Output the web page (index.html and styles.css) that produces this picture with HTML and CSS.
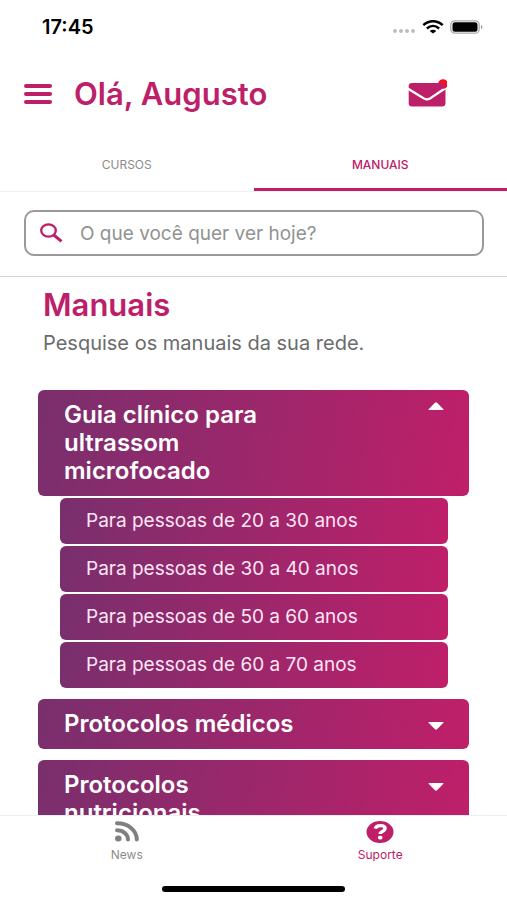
FILE: index.html
```html
<!DOCTYPE html>
<html lang="pt-BR">
<head>
<meta charset="utf-8">
<meta name="viewport" content="width=device-width, initial-scale=1">
<title>Manuais</title>
<link rel="stylesheet" href="styles.css">
</head>
<body>
<div class="app">
  <div class="status-bar">
    <span class="status-time">17:45</span>
    <div class="status-icons">
      <svg width="24" height="6" viewBox="0 0 24 6" fill="#bdbdbd" aria-hidden="true"><circle cx="3" cy="3" r="2"/><circle cx="9" cy="3" r="2"/><circle cx="15" cy="3" r="2"/><circle cx="21" cy="3" r="2"/></svg>
      <svg width="22" height="14" viewBox="0 0 22 14" aria-hidden="true"><g fill="none" stroke="#000" stroke-width="2.5"><path d="M1.3 5.1C7-.1 15-.1 20.7 5.1"/><path d="M4.9 8.5c3.7-3.3 8.500-3.300 12.200 0"/></g><path d="M11 13.500 7.700 11c1.900-1.700 4.700-1.700 6.600 0z"/></svg>
      <svg width="33" height="14" viewBox="0 0 33 14" aria-hidden="true"><rect x=".8" y=".8" width="28.400" height="12.400" rx="4" fill="none" stroke="#aaa" stroke-width="1.300"/><rect x="2.500" y="2.300" width="25" height="9.400" rx="2.500"/><path d="M31 5c2 .8 2 3.200 0 4z" fill="#999"/></svg>
    </div>
  </div>

  <header class="header">
    <button class="icon-button" type="button" aria-label="Menu">
      <svg width="28" height="20" viewBox="0 0 28 20" stroke="#bd2069" stroke-width="3.800" stroke-linecap="round" aria-hidden="true"><path d="M1.900 2h24.200M1.900 10h24.200M1.900 18h24.200"/></svg>
    </button>
    <p class="greeting">Olá, Augusto</p>
    <button class="icon-button" type="button" aria-label="Mensagens">
      <svg width="40" height="30" viewBox="0 0 40 30" aria-hidden="true"><circle cx="36" cy="5" r="4.800" fill="#f70e16"/><path fill="#bd2069" d="M5 4h30q3.500 0 3.500 3.500L22.500 18.500q-2.500 1.600-5 0L1.700 8.800V7.300Q1.700 4 5 4z"/><path fill="#bd2069" d="M1.700 11.500 16.500 20.500q3.500 2 7 0L38.500 10.500V24q0 3.500-3.500 3.500H5Q1.700 27.500 1.700 24z"/></svg>
    </button>
  </header>

  <nav class="tabs" aria-label="Seções">
    <a class="tab" href="#cursos">CURSOS</a>
    <a class="tab tab-active" href="#manuais" aria-current="page">MANUAIS</a>
  </nav>

  <form class="search" role="search">
    <label class="search-box">
      <svg width="24" height="20" viewBox="0 0 24 20" fill="none" stroke="#bd2069" aria-hidden="true"><ellipse cx="8.500" cy="7.500" rx="7.300" ry="6.200" stroke-width="2.300"/><path d="m13.800 12 7.700 6.300" stroke-width="3"/></svg>
      <input class="search-input" type="search" placeholder="O que você quer ver hoje?" aria-label="O que você quer ver hoje?">
    </label>
  </form>

  <main class="content" id="manuais">
    <h1 class="title">Manuais</h1>
    <p class="subtitle">Pesquise os manuais da sua rede.</p>

    <div class="manuals">
      <section>
        <button class="card" type="button" aria-expanded="true">
          <span class="card-title">Guia clínico para ultrassom microfocado</span>
          <svg width="16" height="28" viewBox="0 0 16 28" fill="#fff" aria-hidden="true"><path d="M1 9Q0 9 .8 8.100L7 1.700q1-.9 2 0l6.200 6.400q.8.900-.2.900z"/></svg>
        </button>
        <ul class="sublist">
          <li><a class="subcard" href="#20-30">Para pessoas de 20 a 30 anos</a></li>
          <li><a class="subcard" href="#30-40">Para pessoas de 30 a 40 anos</a></li>
          <li><a class="subcard" href="#50-60">Para pessoas de 50 a 60 anos</a></li>
          <li><a class="subcard" href="#60-70">Para pessoas de 60 a 70 anos</a></li>
        </ul>
      </section>
      <section>
        <button class="card" type="button" aria-expanded="false">
          <span class="card-title">Protocolos médicos</span>
          <svg width="16" height="28" viewBox="0 0 16 28" fill="#fff" aria-hidden="true"><path d="M1 12q-1 0-.2.900L7 19.300q1 .9 2 0l6.200-6.400q.8-.9-.2-.9z"/></svg>
        </button>
      </section>
      <section>
        <button class="card" type="button" aria-expanded="false">
          <span class="card-title">Protocolos nutricionais</span>
          <svg width="16" height="28" viewBox="0 0 16 28" fill="#fff" aria-hidden="true"><path d="M1 12q-1 0-.2.900L7 19.300q1 .9 2 0l6.200-6.400q.8-.9-.2-.9z"/></svg>
        </button>
      </section>
    </div>
  </main>

  <footer class="footer">
    <nav class="bottom-nav" aria-label="Principal">
      <a class="nav-item" href="#news">
        <svg width="28" height="22" viewBox="0 0 28 22" aria-hidden="true"><ellipse cx="5.300" cy="17.500" rx="3.300" ry="2.900" fill="#808080"/><g fill="none" stroke="#808080" stroke-width="4" stroke-linecap="round"><path d="M4 9.300c6.200 0 11 4 11 9.200"/><path d="M4 2.300c11 0 19.800 7 19.800 16.200"/></g></svg>
        <span>News</span>
      </a>
      <a class="nav-item nav-active" href="#suporte">
        <svg width="28" height="22" viewBox="0 0 28 22" aria-hidden="true"><ellipse cx="14" cy="11" rx="13.500" ry="11" fill="#bd2069"/><path d="M9.300 7.700c1-4.300 9.800-3.900 9.800-.3 0 2.900-5 2.700-5 5.700" fill="none" stroke="#fff" stroke-width="3.400"/><rect x="11.900" y="14.800" width="4.600" height="3.800" rx="1.800" fill="#fff"/></svg>
        <span>Suporte</span>
      </a>
    </nav>
    <div class="home-indicator"></div>
  </footer>
</div>
</body>
</html>
```

FILE: styles.css
```css
:root {
  --brand: #bd2069;
  --gradient: linear-gradient(100deg, #792f6d 0%, #bf1f69 100%);
}

* {
  box-sizing: border-box;
}

body {
  margin: 0;
  background: #fff;
  font-family: Inter, Roboto, sans-serif;
}

p,
h1,
ul {
  margin: 0;
  padding: 0;
}

a {
  text-decoration: none;
}

svg {
  display: block;
  flex: none;
}

.app {
  display: flex;
  flex-direction: column;
  height: 100vh;
}

.status-bar {
  display: flex;
  flex: none;
  align-items: center;
  justify-content: space-between;
  height: 54px;
  padding: 0 24px 0 42px;
}

.status-time {
  font-size: 20px;
  font-weight: 600;
}

.status-icons {
  display: flex;
  align-items: flex-end;
  gap: 6px;
}

.header {
  display: flex;
  flex: none;
  align-items: center;
  height: 80px;
  padding: 0 60px 0 24px;
}

.icon-button {
  padding: 0;
  border: 0;
  background: none;
}

.greeting {
  flex: 1;
  margin-left: 22px;
  color: var(--brand);
  font-size: 31px;
  font-weight: 600;
  line-height: 38px;
}

.tabs {
  display: flex;
  flex: none;
  border-bottom: 1px solid #f0f0f0;
}

.tab {
  flex: 1;
  height: 57px;
  padding-top: 4px;
  border-bottom: 3px solid transparent;
  color: #8c8c8c;
  font-size: 12px;
  line-height: 54px;
  text-align: center;
}

.tab-active {
  border-color: var(--brand);
  color: var(--brand);
  font-weight: 500;
}

.search {
  flex: none;
  padding: 18px 23px 20px 24px;
  border-bottom: 1px solid #d2d2d2;
}

.search-box {
  display: flex;
  align-items: center;
  gap: 16px;
  height: 46px;
  padding: 0 14px;
  border: 2px solid #999;
  border-radius: 10px;
}

.search-input {
  flex: 1;
  min-width: 0;
  padding: 0;
  border: 0;
  outline: 0;
  background: none;
  font: inherit;
  font-size: 19px;
}

.search-input::placeholder {
  color: #929292;
}

.content {
  flex: 1;
  min-height: 0;
  padding: 10px 38px 0;
  overflow: auto;
  scrollbar-width: none;
}

.title {
  padding-left: 5px;
  color: var(--brand);
  font-size: 31px;
  font-weight: 600;
  line-height: 36px;
}

.subtitle {
  margin-top: 8px;
  padding-left: 5px;
  color: #6b6b6b;
  font-size: 20px;
  line-height: 24px;
}

.manuals {
  display: flex;
  flex-direction: column;
  gap: 11px;
  margin-top: 35px;
}

.card {
  display: flex;
  align-items: flex-start;
  justify-content: space-between;
  width: 100%;
  padding: 11px 25px 11px 26px;
  border: 0;
  border-radius: 6px;
  background: var(--gradient);
  color: #fff;
  font: inherit;
  text-align: left;
}

.card-title {
  max-width: 64%;
  font-size: 24px;
  font-weight: 600;
  line-height: 28px;
}

.sublist {
  display: flex;
  flex-direction: column;
  gap: 2px;
  margin: 2px 21px 0 22px;
  list-style: none;
}

.subcard {
  display: block;
  padding: 0 26px;
  border-radius: 6px;
  background: var(--gradient);
  color: #ffe6f5;
  font-size: 19px;
  line-height: 46px;
}

.footer {
  flex: none;
  padding-bottom: 8px;
  border-top: 1px solid #eee;
  background: #fff;
}

.bottom-nav {
  display: flex;
}

.nav-item {
  display: flex;
  flex: 1;
  flex-direction: column;
  align-items: center;
  gap: 4px;
  padding-top: 5px;
  color: #8c8c8c;
  font-size: 12px;
  line-height: 16px;
}

.nav-active {
  color: var(--brand);
}

.home-indicator {
  width: 36%;
  height: 6px;
  margin: 23px auto 0;
  border-radius: 3px;
  background: #000;
}
```
